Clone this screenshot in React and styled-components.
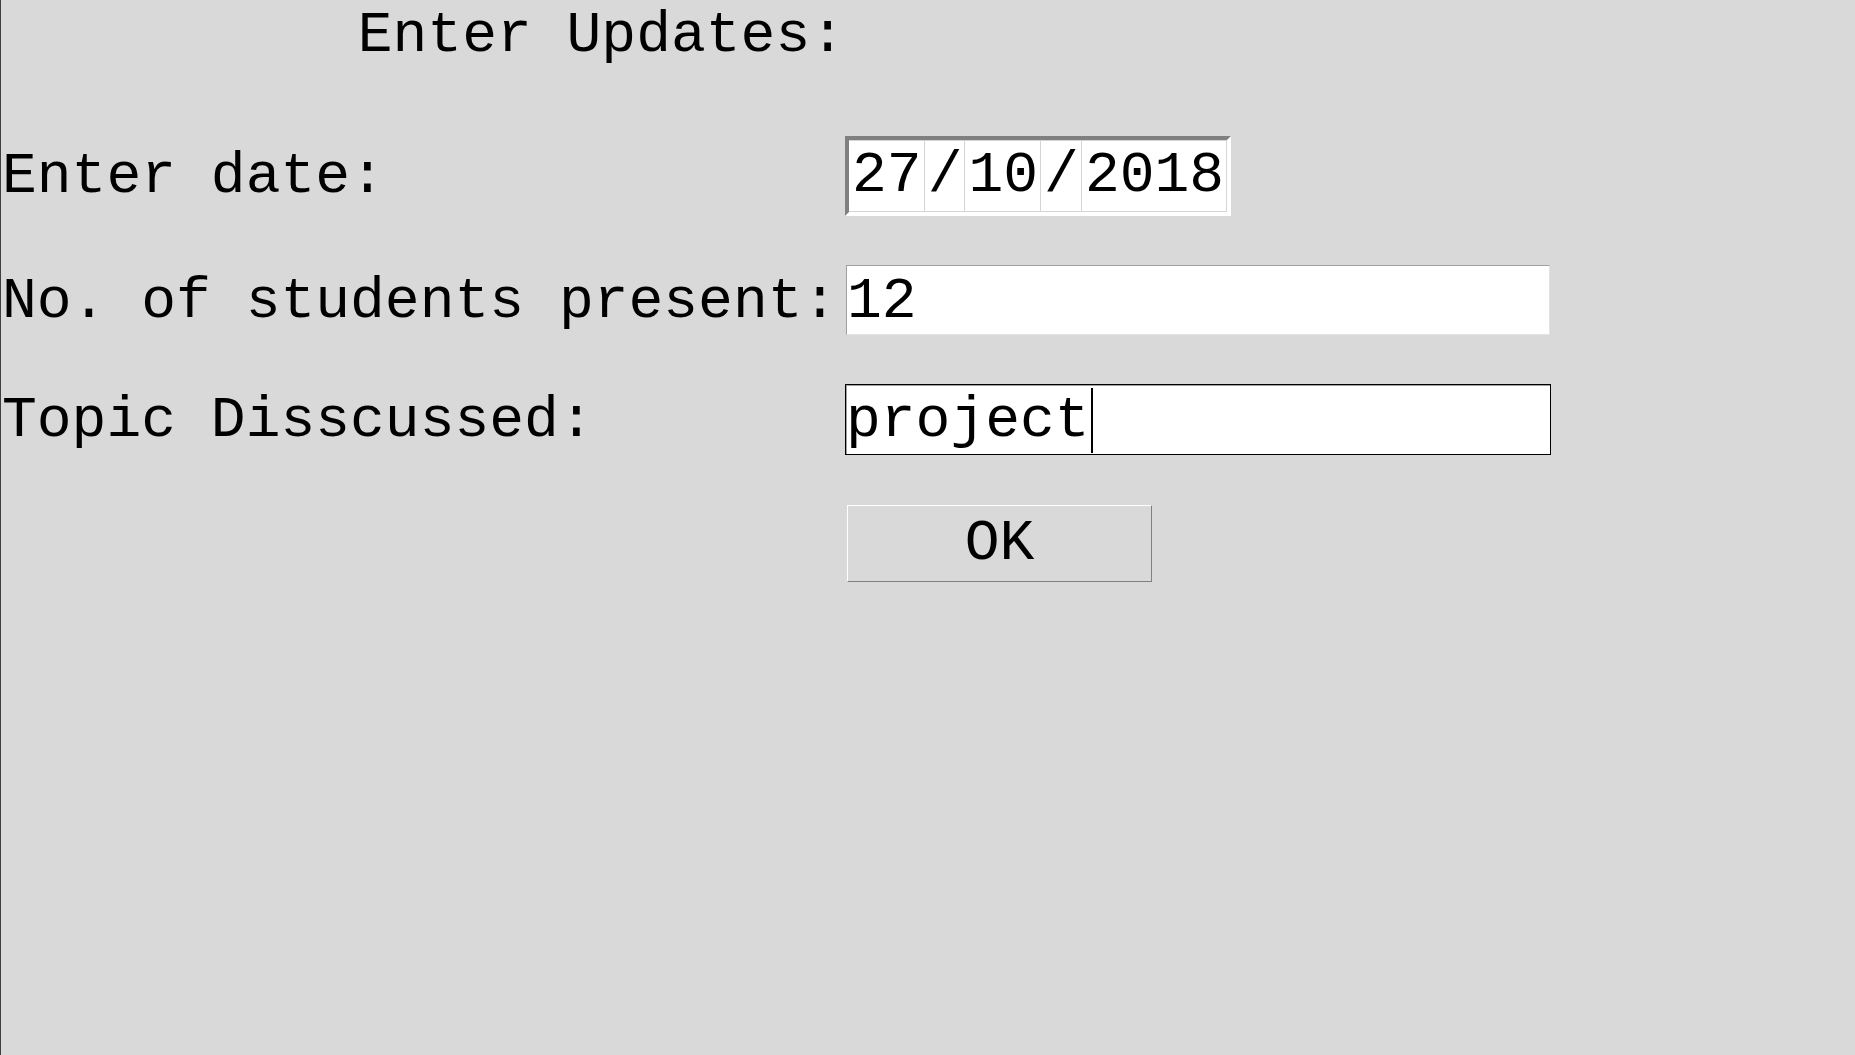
import React from "react";
import styled, { createGlobalStyle } from "styled-components";

const monoStack = `"Courier New", "Nimbus Mono PS", "Nimbus Mono L", FreeMono, "Liberation Mono", monospace`;

const GlobalStyle = createGlobalStyle`
    html, body {
        margin: 0;
        padding: 0;
        background: #d9d9d9;
    }
    body {
        font-family: ${monoStack};
    }
`;

const Window = styled.div`
    min-height: 100vh;
    box-sizing: border-box;
    border-left: 1px solid #3d4043;
    background: #d9d9d9;
    color: #000;
    font-family: ${monoStack};
    font-size: 58px;
`;

const Form = styled.div`
    display: grid;
    grid-template-columns: 844px auto;
    grid-template-rows: 87px 80px 70px 71px 77px;
    row-gap: 49px;
    justify-items: start;
`;

const Title = styled.div`
    grid-column: 1;
    justify-self: end;
    padding-top: 3px;
    line-height: 66px;
    white-space: pre;
`;

const Label = styled.div`
    grid-column: 1;
    padding: ${p => p.$top}px 0 0 1px;
    line-height: 66px;
    white-space: pre;
`;

const DateBox = styled.div`
    display: inline-flex;
    box-sizing: border-box;
    height: 80px;
    border-style: solid;
    border-width: 4px;
    border-color: #808080 #fff #fff #808080;
    background: #fff;
`;

const DateCell = styled.span`
    box-sizing: border-box;
    height: 72px;
    padding: 0 2px 0 3px;
    line-height: 70px;
    border: 1px solid #d4d4d4;
    border-left: none;
`;

const Field = styled.div`
    box-sizing: border-box;
    width: ${p => p.$width}px;
    height: ${p => p.$height}px;
    margin-left: ${p => p.$shift || 0}px;
    padding: 3px 0 0 ${p => p.$pad || 0}px;
    line-height: 66px;
    white-space: pre;
    background: #fff;
    border: 1px solid;
    border-color: ${p => p.$focused ? "#000" : "#a0a0a0 #e3e3e3 #e3e3e3 #a0a0a0"};
    box-shadow: ${p => p.$focused ? "inset 1px 1px 0 #a0a0a0" : "none"};
`;

const Caret = styled.span`
    display: inline-block;
    width: 2px;
    height: 65px;
    margin-left: 1px;
    vertical-align: top;
    background: #000;
`;

const OkButton = styled.button`
    box-sizing: border-box;
    width: 305px;
    height: 77px;
    margin: 1px 0 0 2px;
    padding: 0;
    font: inherit;
    line-height: 66px;
    color: #000;
    background: #d9d9d9;
    border: 1px solid;
    border-color: #fff #808080 #808080 #fff;
`;

const dateParts = ["27", "/", "10", "/", "2018"];

export default function App() {
    return (
        <Window>
            <GlobalStyle />
            <Form>
                <Title>Enter Updates:</Title>
                <div />

                <Label $top={8}>Enter date:</Label>
                <DateBox>
                    {dateParts.map((part, i) => (
                        <DateCell key={i}>{part}</DateCell>
                    ))}
                </DateBox>

                <Label $top={4}>No. of students present:</Label>
                <Field $width={704} $height={70} $shift={1}>12</Field>

                <Label $top={4}>Topic Disscussed:</Label>
                <Field $width={706} $height={71} $focused>
                    project<Caret />
                </Field>

                <div />
                <OkButton>OK</OkButton>
            </Form>
        </Window>
    );
}
